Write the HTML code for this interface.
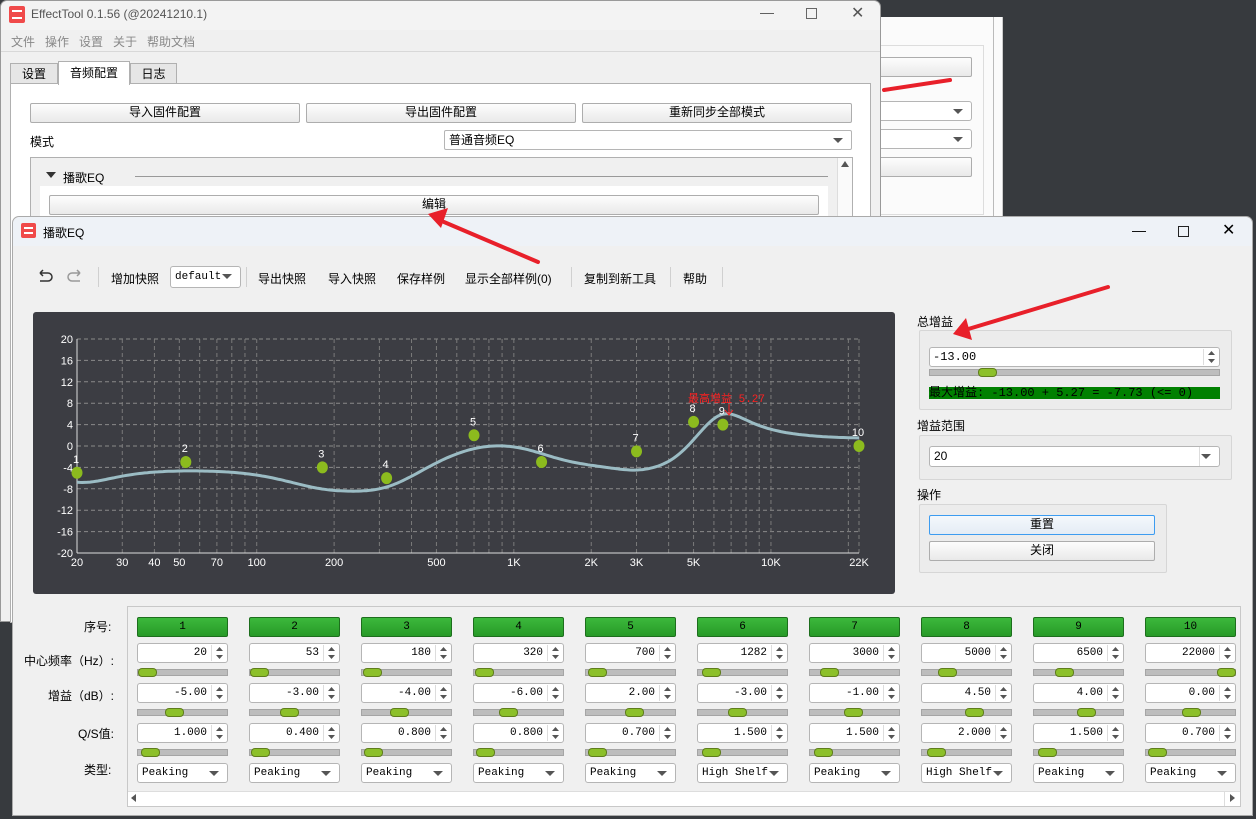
<!DOCTYPE html>
<html><head><meta charset="utf-8">
<style>
*{box-sizing:border-box;margin:0;padding:0}
body{width:1256px;height:819px;overflow:hidden;background:#373a3e;font-family:"Liberation Sans","Noto Sans CJK SC",sans-serif;font-size:12px;color:#000;position:relative}
.a{position:absolute}
.btn{position:absolute;border:1px solid #adadad;border-radius:2px;background:linear-gradient(#fdfdfd,#e9e9e9);text-align:center;font-size:12px;line-height:17px}
.mono{font-family:"Liberation Mono","Noto Sans CJK SC",monospace}
.spin{position:absolute;background:#fff;border:1px solid #b5b5b5;border-radius:3px;height:20px;font-family:"Liberation Mono",monospace;font-size:11px;line-height:18px;text-align:right;padding-right:20px}
.spin:after{content:"";position:absolute;right:15px;top:1px;bottom:1px;border-left:1px solid #ddd}
.arr{position:absolute;right:3px;width:9px;height:16px;top:1px}
.sl{position:absolute;height:7px;background:#bdbdbd;border:1px solid #a5a5a5}
.th{position:absolute;top:-2px;width:19px;height:9px;border-radius:4px;background:#8cc02a;border:1px solid #5f7d1c}
.combo{position:absolute;background:#fff;border:1px solid #b5b5b5;border-radius:3px;height:20px;font-family:"Liberation Mono",monospace;font-size:11px;line-height:18px;padding-left:4px}
.combo:after{content:"";position:absolute;right:8px;top:7px;border-left:5px solid transparent;border-right:5px solid transparent;border-top:5px solid #555}
.gb{position:absolute;border:1px solid #d6d6d6;border-radius:2px;background:#ececec}
</style></head><body>

<div class="a" style="left:870px;top:17px;width:133px;height:200px;background:#fbfbfb;border-right:1px solid #ccc"></div>
<div class="a" style="left:993px;top:17px;width:1px;height:200px;background:#bbb"></div>
<div class="a" style="left:880px;top:45px;width:104px;height:170px;border:1px solid #ddd"></div>
<div class="btn" style="left:870px;top:57px;width:102px;height:20px"></div>
<div class="combo" style="left:870px;top:101px;width:102px"></div>
<div class="combo" style="left:870px;top:129px;width:102px"></div>
<div class="btn" style="left:870px;top:157px;width:102px;height:20px"></div>

<div class="a" style="left:0;top:0;width:881px;height:622px;background:#f0f0f0;border:1px solid #999;border-radius:7px 7px 0 0"></div>
<div class="a" style="left:1px;top:1px;width:879px;height:29px;background:#f3f3f3;border-radius:7px 7px 0 0"></div>
<div class="a" style="left:9px;top:6px;width:16px;height:17px;background:#f04a4a;border-radius:2px"></div>
<div class="a" style="left:12px;top:10px;width:10px;height:9px;border-top:2px solid #fff;border-bottom:2px solid #fff"></div>
<div class="a" style="left:31px;top:7px;color:#555;font-size:12px">EffectTool 0.1.56  (@20241210.1)</div>
<div class="a" style="left:760px;top:4px;color:#555;font-size:14px">—</div>
<div class="a" style="left:806px;top:8px;width:11px;height:11px;border:1px solid #666"></div>
<div class="a" style="left:851px;top:3px;color:#555;font-size:16px">✕</div>
<div class="a" style="left:11px;top:33px;color:#888">文件&nbsp;&nbsp;&nbsp;操作&nbsp;&nbsp;&nbsp;设置&nbsp;&nbsp;&nbsp;关于&nbsp;&nbsp;&nbsp;帮助文档</div>
<div class="a" style="left:1px;top:51px;width:879px;height:1px;background:#d8d8d8"></div>
<div class="a" style="left:10px;top:63px;width:48px;height:21px;background:#e6e6e6;border:1px solid #b0b0b0;text-align:center;line-height:20px">设置</div>
<div class="a" style="left:58px;top:61px;width:72px;height:24px;background:#fff;border:1px solid #b0b0b0;border-bottom:none;text-align:center;line-height:22px;z-index:2">音频配置</div>
<div class="a" style="left:130px;top:63px;width:47px;height:21px;background:#e6e6e6;border:1px solid #b0b0b0;text-align:center;line-height:20px">日志</div>
<div class="a" style="left:10px;top:83px;width:861px;height:540px;background:#fff;border:1px solid #b0b0b0"></div>
<div class="btn" style="left:30px;top:103px;width:270px;height:20px">导入固件配置</div>
<div class="btn" style="left:306px;top:103px;width:270px;height:20px">导出固件配置</div>
<div class="btn" style="left:582px;top:103px;width:270px;height:20px">重新同步全部模式</div>
<div class="a" style="left:30px;top:133px">模式</div>
<div class="combo" style="left:444px;top:130px;width:408px;font-family:'Liberation Sans','Noto Sans CJK SC',sans-serif;font-size:12px;border-radius:2px">普通音频EQ</div>
<div class="a" style="left:30px;top:157px;width:823px;height:470px;background:#f0f0f0;border:1px solid #b0b0b0"></div>
<div class="a" style="left:837px;top:158px;width:15px;height:60px;background:#fafafa;border-left:1px solid #ddd"></div>
<div class="a" style="left:841px;top:161px;border-left:4px solid transparent;border-right:4px solid transparent;border-bottom:6px solid #555"></div>
<div class="a" style="left:46px;top:172px;border-left:5px solid transparent;border-right:5px solid transparent;border-top:6px solid #333"></div>
<div class="a" style="left:63px;top:169px">播歌EQ</div>
<div class="a" style="left:135px;top:176px;width:693px;height:1px;background:#999"></div>
<div class="a" style="left:40px;top:186px;width:788px;height:40px;background:#fff"></div>
<div class="btn" style="left:49px;top:195px;width:770px;height:20px">编辑</div>

<div class="a" style="left:12px;top:216px;width:1241px;height:600px;background:#f0f0f0;border:1px solid #aaa;border-radius:7px 7px 0 0"></div>
<div class="a" style="left:13px;top:217px;width:1239px;height:29px;background:#eef2f7;border-radius:7px 7px 0 0"></div>
<div class="a" style="left:21px;top:223px;width:15px;height:15px;background:#f04a4a;border-radius:2px"></div>
<div class="a" style="left:24px;top:227px;width:9px;height:7px;border-top:2px solid #fff;border-bottom:2px solid #fff"></div>
<div class="a" style="left:43px;top:224px">播歌EQ</div>
<div class="a" style="left:1132px;top:222px;font-size:14px">—</div>
<div class="a" style="left:1178px;top:226px;width:11px;height:11px;border:1px solid #222"></div>
<div class="a" style="left:1222px;top:220px;font-size:16px">✕</div>

<svg class="a" style="left:36px;top:268px" width="50" height="18"><path d="M4 5h8a4 4 0 0 1 0 8H4M4 5l3-3M4 5l3 3" fill="none" stroke="#333" stroke-width="1.5"/><path d="M44 5h-8a4 4 0 0 0 0 8h8M44 5l-3-3M44 5l-3 3" fill="none" stroke="#999" stroke-width="1.5"/></svg>
<div class="a" style="left:98px;top:267px;width:1px;height:20px;background:#d0d0d0"></div>
<div class="a" style="left:111px;top:270px">增加快照</div>
<div class="combo" style="left:170px;top:266px;width:71px;height:22px;line-height:20px">default</div>
<div class="a" style="left:246px;top:267px;width:1px;height:20px;background:#d0d0d0"></div>
<div class="a" style="left:258px;top:270px">导出快照</div>
<div class="a" style="left:328px;top:270px">导入快照</div>
<div class="a" style="left:397px;top:270px">保存样例</div>
<div class="a" style="left:465px;top:270px">显示全部样例(0)</div>
<div class="a" style="left:571px;top:267px;width:1px;height:20px;background:#d0d0d0"></div>
<div class="a" style="left:584px;top:270px">复制到新工具</div>
<div class="a" style="left:670px;top:267px;width:1px;height:20px;background:#d0d0d0"></div>
<div class="a" style="left:683px;top:270px">帮助</div>
<div class="a" style="left:722px;top:267px;width:1px;height:20px;background:#d0d0d0"></div>

<svg id="ch" class="a" style="left:33px;top:312px" width="862" height="282"></svg>

<div class="a" style="left:917px;top:313px">总增益</div>
<div class="gb" style="left:919px;top:330px;width:313px;height:80px"></div>
<div class="spin" style="left:929px;top:347px;width:291px;text-align:left;padding-left:3px;font-size:12px">-13.00<svg class="arr" viewBox="0 0 9 16"><path d="M1 6l3.5-4 3.5 4zM1 10l3.5 4 3.5-4z" fill="#555"/></svg></div>
<div class="sl" style="left:929px;top:369px;width:291px"><div class="th" style="left:48px"></div></div>
<div class="a mono" style="left:929px;top:387px;width:291px;height:12px;background:#008000;font-size:12px;line-height:12px">最大增益: -13.00 + 5.27 = -7.73 (&lt;= 0)</div>
<div class="a" style="left:917px;top:417px">增益范围</div>
<div class="gb" style="left:919px;top:435px;width:313px;height:45px"></div>
<div class="combo" style="left:929px;top:446px;width:291px;height:21px;font-family:'Liberation Sans',sans-serif;font-size:12px">20</div>
<div class="a" style="left:1199px;top:447px;width:1px;height:19px;background:#ddd"></div>
<div class="a" style="left:917px;top:486px">操作</div>
<div class="gb" style="left:919px;top:504px;width:248px;height:69px"></div>
<div class="btn" style="left:929px;top:515px;width:226px;height:20px;border-color:#3d9cf0;background:linear-gradient(#f4f8fc,#e4ecf5)">重置</div>
<div class="btn" style="left:929px;top:541px;width:226px;height:20px">关闭</div>

<div class="a" style="left:127px;top:606px;width:1114px;height:201px;border:1px solid #c8c8c8;background:#f0f0f0"></div>
<div class="a" style="left:84px;top:618px">序号:</div>
<div class="a" style="left:24px;top:652px">中心频率（Hz）:</div>
<div class="a" style="left:48px;top:687px">增益（dB）:</div>
<div class="a" style="left:78px;top:725px">Q/S值:</div>
<div class="a" style="left:84px;top:761px">类型:</div>
<div id="tb"></div>
<div class="a" style="left:128px;top:791px;width:1112px;height:15px;background:#fff;border-top:1px solid #ddd"></div>
<div class="a" style="left:131px;top:794px;border-top:4px solid transparent;border-bottom:4px solid transparent;border-right:5px solid #555"></div>
<div class="a" style="left:1230px;top:794px;border-top:4px solid transparent;border-bottom:4px solid transparent;border-left:5px solid #555"></div>
<div class="a" style="left:1224px;top:792px;width:1px;height:14px;background:#ddd"></div>

<svg class="a" style="left:0;top:0" width="1256" height="819">
<g stroke="#e8202a" stroke-width="4" stroke-linecap="round" fill="none">
<path d="M538 262L444 222"/><path d="M950 80L884 90"/><path d="M1108 287L965 330"/>
</g>
<path d="M428 214L448 208L441 228Z" fill="#e8202a"/>
<path d="M953 334L966 318L972 340Z" fill="#e8202a"/>
</svg>

<script>
var B=[[20,-5,1,'Peaking'],[53,-3,.4,'Peaking'],[180,-4,.8,'Peaking'],[320,-6,.8,'Peaking'],[700,2,.7,'Peaking'],[1282,-3,1.5,'High Shelf'],[3000,-1,1.5,'Peaking'],[5000,4.5,2,'High Shelf'],[6500,4,1.5,'Peaking'],[22000,0,.7,'Peaking']];
var h='',ar='<svg class="arr" viewBox="0 0 9 16"><path d="M1 6l3.5-4 3.5 4zM1 10l3.5 4 3.5-4z" fill="#555"/></svg>';
B.forEach(function(b,i){var x=137+112*i;
h+='<div class="a" style="left:'+x+'px;top:617px;width:91px;height:20px;background:linear-gradient(#3cb83c,#279a27);border:1px solid #1d6e1d;border-radius:2px;text-align:center;line-height:18px;font-family:Liberation Mono,monospace;font-size:11px">'+(i+1)+'</div>';
h+='<div class="spin" style="left:'+x+'px;top:643px;width:91px">'+b[0]+ar+'</div>';
h+='<div class="sl" style="left:'+x+'px;top:669px;width:91px"><div class="th" style="left:'+Math.round((b[0]-20)/21980*71)+'px"></div></div>';
h+='<div class="spin" style="left:'+x+'px;top:683px;width:91px">'+b[1].toFixed(2)+ar+'</div>';
h+='<div class="sl" style="left:'+x+'px;top:709px;width:91px"><div class="th" style="left:'+Math.round((b[1]+20)/40*71)+'px"></div></div>';
h+='<div class="spin" style="left:'+x+'px;top:723px;width:91px">'+b[2].toFixed(3)+ar+'</div>';
h+='<div class="sl" style="left:'+x+'px;top:749px;width:91px"><div class="th" style="left:'+Math.round(b[2]*2.5)+'px"></div></div>';
h+='<div class="combo" style="left:'+x+'px;top:763px;width:91px">'+b[3]+'</div>';});
document.getElementById('tb').outerHTML=h;
var s='<rect width="862" height="282" rx="3" fill="#3c3d43"/>',L=Math.log10(1100);
function fx(f){return 44+Math.log10(f/20)/L*782}function gy(g){return 134-g*5.35}
for(var g=-20;g<=20;g+=4){s+='<line x1="44" x2="826" y1="'+gy(g)+'" y2="'+gy(g)+'" stroke="#8a8a8a" stroke-dasharray="4,3"/>';
s+='<text x="40" y="'+(gy(g)+4)+'" fill="#fff" font-size="11" text-anchor="end" font-family="Liberation Sans">'+g+'</text>';}
[30,40,50,60,70,80,90,100,200,300,400,500,600,700,800,900,1000,2000,3000,4000,5000,6000,7000,8000,9000,10000,20000,22000].forEach(function(f){s+='<line x1="'+fx(f)+'" x2="'+fx(f)+'" y1="27" y2="241" stroke="#7a7a7a" stroke-dasharray="4,3"/>';});
s+='<line x1="44" x2="44" y1="27" y2="241" stroke="#ddd"/><line x1="44" x2="826" y1="241" y2="241" stroke="#ddd"/>';
[[20,'20'],[30,'30'],[40,'40'],[50,'50'],[70,'70'],[100,'100'],[200,'200'],[500,'500'],[1000,'1K'],[2000,'2K'],[3000,'3K'],[5000,'5K'],[10000,'10K'],[22000,'22K']].forEach(function(t){s+='<text x="'+fx(t[0])+'" y="254" fill="#fff" font-size="11" text-anchor="middle" font-family="Liberation Sans">'+t[1]+'</text>';});
var fs=48000;function resp(f){var tot=0;B.forEach(function(b){var A=Math.pow(10,b[1]/40),w0=2*Math.PI*b[0]/fs,q=b[3]=='Peaking'?b[2]:b[2]*0.65,al=Math.sin(w0)/(2*q),c=Math.cos(w0),b0,b1,b2,a0,a1,a2;
if(b[3]=='Peaking'){b0=1+al*A;b1=-2*c;b2=1-al*A;a0=1+al/A;a1=-2*c;a2=1-al/A;}else{var sq=2*Math.sqrt(A)*al;b0=A*((A+1)+(A-1)*c+sq);b1=-2*A*((A-1)+(A+1)*c);b2=A*((A+1)+(A-1)*c-sq);a0=(A+1)-(A-1)*c+sq;a1=2*((A-1)-(A+1)*c);a2=(A+1)-(A-1)*c-sq;}
var w=2*Math.PI*f/fs,cr=Math.cos(w),ci=-Math.sin(w),c2r=Math.cos(2*w),c2i=-Math.sin(2*w);
var nr=b0+b1*cr+b2*c2r,ni=b1*ci+b2*c2i,dr=a0+a1*cr+a2*c2r,di=a1*ci+a2*c2i;tot+=10*Math.log10((nr*nr+ni*ni)/(dr*dr+di*di));});return tot;}
var p='';for(var i=0;i<=300;i++){var f=20*Math.pow(1100,i/300);p+=(i?'L':'M')+fx(f).toFixed(1)+' '+gy(resp(f)).toFixed(1);}
s+='<path d="'+p+'" fill="none" stroke="#9bbcc4" stroke-width="3"/>';
B.forEach(function(b,i){var x=fx(b[0]),y=gy(b[1]);s+='<ellipse cx="'+x+'" cy="'+y+'" rx="5.5" ry="6" fill="#8cbb1e"/><text x="'+(x-1)+'" y="'+(y-10)+'" fill="#fff" font-size="11" text-anchor="middle" font-family="Liberation Sans">'+(i+1)+'</text>';});
s+='<text x="655" y="90" fill="#ff2020" font-size="11" font-family="Liberation Mono,Noto Sans CJK SC">最高增益 5.27</text><path d="M696 92v10M692 98l4 5 4-5" stroke="#ff2020" fill="none"/>';
document.getElementById('ch').innerHTML=s;
</script>
</body></html>
